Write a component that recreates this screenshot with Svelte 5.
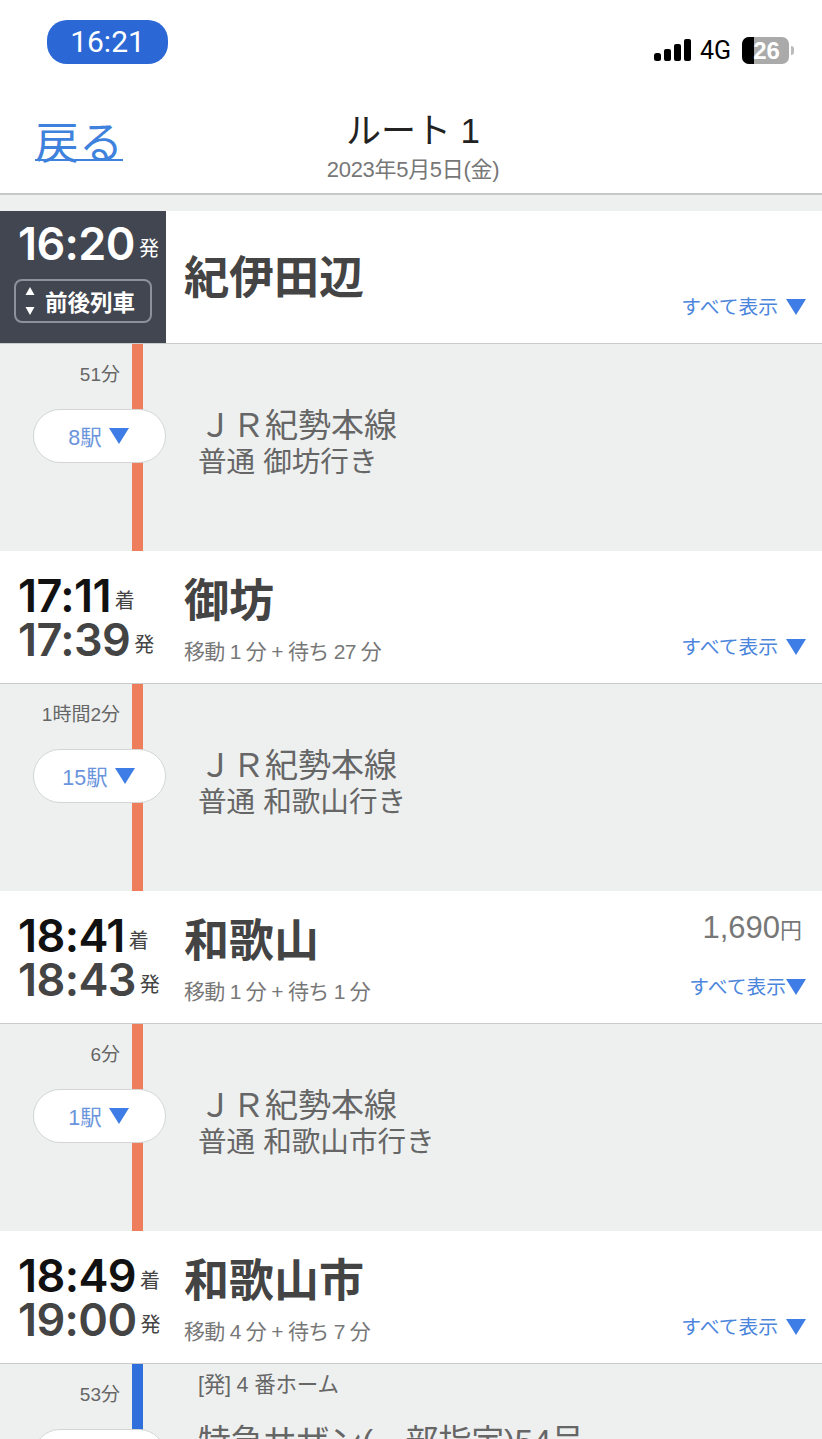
<script>
  const legs = [
    {
      first: true,
      times: [{ t: "16:20", k: "発" }],
      name: "紀伊田辺",
      dur: "51分",
      stops: "8駅",
      line: "ＪＲ紀勢本線",
      dest: "普通 御坊行き",
    },
    {
      times: [{ t: "17:11", k: "着", dark: true }, { t: "17:39", k: "発" }],
      name: "御坊",
      note: "移動 1 分 + 待ち 27 分",
      dur: "1時間2分",
      stops: "15駅",
      line: "ＪＲ紀勢本線",
      dest: "普通 和歌山行き",
    },
    {
      times: [{ t: "18:41", k: "着", dark: true }, { t: "18:43", k: "発" }],
      name: "和歌山",
      note: "移動 1 分 + 待ち 1 分",
      fare: "1,690",
      dur: "6分",
      stops: "1駅",
      line: "ＪＲ紀勢本線",
      dest: "普通 和歌山市行き",
    },
    {
      times: [{ t: "18:49", k: "着", dark: true }, { t: "19:00", k: "発" }],
      name: "和歌山市",
      note: "移動 4 分 + 待ち 7 分",
      dur: "53分",
      stops: "",
      express: true,
      platform: "[発] 4 番ホーム",
      line: "特急サザン(一部指定)54号",
    },
  ];
</script>

<div class="page">
  <div class="status">
    <span class="clock">16:21</span>
    <div class="indicators">
      <svg class="signal" width="37" height="24" viewBox="0 0 37 24">
        <rect x="0" y="15" width="7" height="8" rx="2.5" />
        <rect x="10" y="11" width="7" height="12" rx="2" />
        <rect x="20" y="6" width="7" height="17" rx="2" />
        <rect x="30" y="1" width="7" height="22" rx="2" />
      </svg>
      <span class="net">4G</span>
      <span class="battery"><span class="fill"></span><b>26</b></span>
      <span class="nub"></span>
    </div>
  </div>

  <header class="nav">
    <span class="back">戻る</span>
    <div class="title">
      <div class="route">ルート 1</div>
      <div class="date">2023年5月5日(金)</div>
    </div>
  </header>

  <main class="list">
    {#each legs as leg}
      <section class="station">
        <div class="times" class:current={leg.first}>
          {#each leg.times as row}
            <div class="time" class:dark={row.dark}>
              <span class="hm">{row.t}</span><span class="kind">{row.k}</span>
            </div>
          {/each}
          {#if leg.first}
            <div class="nearby">
              <svg width="10" height="28" viewBox="0 0 10 28">
                <path d="M5 0 9.5 8H.5zM5 28 .5 20h9z" fill="#fff" />
              </svg>
              前後列車
            </div>
          {/if}
        </div>
        <div class="info">
          <div class="name">{leg.name}</div>
          {#if leg.note}<div class="note">{leg.note}</div>{/if}
        </div>
        <div class="side">
          {#if leg.fare}<div class="fare">{leg.fare}<small>円</small></div>{/if}
          <div class="more" class:tight={leg.fare}>すべて表示<i class="tri"></i></div>
        </div>
      </section>
      <section class="segment">
        <div class="rail" class:express={leg.express}>
          <div class="dur">{leg.dur}</div>
          <div class="pill">{leg.stops}{#if leg.stops}<i class="tri"></i>{/if}</div>
        </div>
        <div class="train" class:express={leg.express}>
          {#if leg.platform}<div class="platform">{leg.platform}</div>{/if}
          <div class="line">{leg.line}</div>
          {#if leg.dest}<div class="dest">{leg.dest}</div>{/if}
        </div>
      </section>
    {/each}
  </main>
</div>

<style>
  :global(body) {
    margin: 0;
    background: #fff;
  }
  .page {
    width: 822px;
    height: 1439px;
    overflow: hidden;
    background: #eef0f0;
    font-family: "Liberation Sans", "Noto Sans CJK JP", sans-serif;
    color: #444;
  }

  .status {
    height: 90px;
    background: #fff;
    display: flex;
    justify-content: space-between;
    padding: 20px 28px 0 47px;
    box-sizing: border-box;
  }
  .clock {
    width: 121px;
    height: 44px;
    border-radius: 20px;
    background: #2b68d6;
    color: #fff;
    font: 30px/44px Roboto, sans-serif;
    text-align: center;
  }
  .indicators {
    display: flex;
    align-items: center;
    height: 20px;
    margin-top: 20px;
    color: #000;
  }
  .signal {
    fill: #000;
    margin-right: 9px;
  }
  .net {
    font: 25px Roboto, sans-serif;
    margin-right: 11px;
  }
  .battery {
    position: relative;
    width: 47px;
    height: 27px;
    border-radius: 7px;
    background: #aaa;
    overflow: hidden;
    color: #fff;
    text-align: center;
  }
  .battery .fill {
    position: absolute;
    left: 0;
    top: 0;
    bottom: 0;
    width: 12px;
    background: #000;
  }
  .battery b {
    position: relative;
    font: bold 24px/27px "Liberation Sans", sans-serif;
    margin-left: 2px;
  }
  .nub {
    width: 3px;
    height: 9px;
    margin-left: 2px;
    border-radius: 0 3px 3px 0;
    background: #bbb;
  }

  .nav {
    height: 105px;
    box-sizing: border-box;
    background: #fff;
    border-bottom: 2px solid #c4c8c8;
    position: relative;
    text-align: center;
    margin-bottom: 16px;
  }
  .back {
    position: absolute;
    left: 35px;
    top: 26px;
    font-size: 44px;
    line-height: 56px;
    color: #3f82de;
    text-decoration: underline;
    text-decoration-thickness: 2px;
    text-underline-offset: 0;
  }
  .title {
    padding-top: 18px;
    margin-left: 4px;
  }
  .route {
    font-size: 35px;
    line-height: 46px;
    color: #222;
  }
  .date {
    font-size: 22px;
    line-height: 31px;
    color: #777;
    letter-spacing: -0.3px;
  }

  .station {
    height: 133px;
    box-sizing: border-box;
    background: #fff;
    border-bottom: 1px solid #c8cccc;
    display: flex;
  }
  .times {
    width: 166px;
    flex-shrink: 0;
    box-sizing: border-box;
    padding: 23px 0 0 18px;
  }
  .times.current {
    background: #414650;
    color: #fff;
    padding-top: 8px;
  }
  .time {
    display: flex;
    align-items: flex-end;
    height: 44px;
    white-space: nowrap;
  }
  .time.dark .hm {
    color: #111;
  }
  .hm {
    font-family: Inter, "Liberation Sans", sans-serif;
    font-size: 45px;
    line-height: 44px;
    font-weight: 600;
    letter-spacing: -0.6px;
  }
  .kind {
    font-size: 20px;
    line-height: 24px;
    margin: 0 0 5px 4px;
  }
  .current .time {
    height: 47px;
  }
  .nearby {
    width: 138px;
    height: 44px;
    margin: 13px 0 0 -4px;
    box-sizing: border-box;
    border: 2px solid #8d929a;
    border-radius: 8px;
    display: flex;
    align-items: center;
    gap: 10px;
    padding-left: 9px;
    font-size: 22.5px;
    font-weight: bold;
  }

  .info {
    padding: 22px 0 0 18px;
    flex: 1;
  }
  .name {
    font-size: 45px;
    line-height: 58px;
    font-weight: 700;
    color: #444;
  }
  .station:first-child .name {
    margin-top: 17px;
  }
  .note {
    font-size: 21px;
    line-height: 30px;
    margin-top: 6px;
    color: #777;
    letter-spacing: -0.7px;
  }

  .side {
    width: 170px;
    padding-right: 16px;
    display: flex;
    flex-direction: column;
    justify-content: flex-end;
    align-items: flex-end;
    padding-bottom: 21px;
  }
  .fare {
    font-size: 31px;
    line-height: 36px;
    color: #777;
    margin: 0 4px 23px 0;
  }
  .fare small {
    font-size: 22px;
  }
  .more {
    font-size: 19.8px;
    line-height: 30px;
    color: #4b86dc;
    display: flex;
    align-items: center;
    white-space: nowrap;
  }
  .tri {
    width: 0;
    height: 0;
    margin-left: 8px;
    border-left: 10px solid transparent;
    border-right: 10px solid transparent;
    border-top: 16px solid #3f7de6;
  }
  .more.tight .tri {
    margin-left: 0;
  }

  .segment {
    height: 207px;
    box-sizing: border-box;
    display: flex;
    position: relative;
  }
  .rail {
    width: 143px;
    flex-shrink: 0;
    position: relative;
    box-sizing: border-box;
    border-right: 11px solid #ee7d5c;
  }
  .rail.express {
    border-right-color: #2f6fdb;
  }
  .dur {
    text-align: right;
    font-size: 19px;
    line-height: 28px;
    color: #666;
    padding: 17px 12px 0 0;
  }
  .pill {
    position: absolute;
    left: 33px;
    top: 65px;
    width: 133px;
    height: 54px;
    box-sizing: border-box;
    background: #fff;
    border: 1px solid #d4d6d6;
    border-radius: 27px;
    display: flex;
    align-items: center;
    justify-content: center;
    padding: 0 2px 2px 0;
    font-size: 21.5px;
    color: #6a94dc;
  }
  .pill .tri {
    margin-left: 7px;
    margin-top: 2px;
  }
  .train {
    padding: 62px 0 0 55px;
    color: #666;
  }
  .line {
    font-size: 33px;
    line-height: 40px;
    margin-left: 1px;
  }
  .dest {
    font-size: 28.6px;
    line-height: 32px;
  }
  .train.express {
    padding-top: 5px;
    padding-left: 55px;
  }
  .express .line {
    margin-left: 0;
    letter-spacing: -0.2px;
  }
  .platform {
    font-size: 21.5px;
    line-height: 32px;
    margin-bottom: 21px;
    letter-spacing: -0.2px;
  }
</style>
